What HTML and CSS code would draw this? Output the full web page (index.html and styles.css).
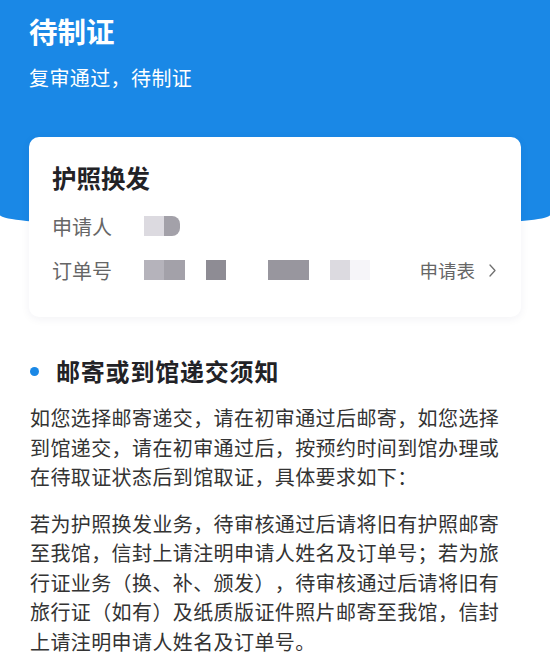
FILE: index.html
```html
<!DOCTYPE html>
<html lang="zh-CN">
<head>
<meta charset="utf-8">
<title>待制证</title>
<link rel="stylesheet" href="styles.css">
</head>
<body>
<div class="page">
  <header class="header">
    <h1 class="title">待制证</h1>
    <p class="subtitle">复审通过，待制证</p>
  </header>
  <section class="card">
    <h2 class="card-title">护照换发</h2>
    <div class="rows">
      <div class="row">
        <span class="label">申请人</span>
        <span class="values">
          <i class="blk b-light w20"></i><i class="blk b-mid2 w16 round-r"></i>
        </span>
      </div>
      <div class="row">
        <span class="label">订单号</span>
        <span class="values">
          <i class="blk b-mid1 w20"></i><i class="blk b-mid2 w21"></i>
          <i class="blk b-dark w20 gap21"></i>
          <i class="blk b-dark2 w41 gap42"></i>
          <i class="blk b-light w20 gap21"></i><i class="blk b-faint w20"></i>
        </span>
        <span class="link">申请表<svg class="chev" width="7" height="13" viewBox="0 0 7 13"><polyline points="1,1 6,6.5 1,12" fill="none" stroke="#707070" stroke-width="1.3" stroke-linecap="round" stroke-linejoin="round"/></svg></span>
      </div>
    </div>
  </section>
  <section class="notice">
    <h3 class="notice-title"><span class="dot"></span>邮寄或到馆递交须知</h3>
    <p class="para">如您选择邮寄递交，请在初审通过后邮寄，如您选择到馆递交，请在初审通过后，按预约时间到馆办理或在待取证状态后到馆取证，具体要求如下：</p>
    <p class="para">若为护照换发业务，待审核通过后请将旧有护照邮寄至我馆，信封上请注明申请人姓名及订单号；若为旅行证业务（换、补、颁发），待审核通过后请将旧有旅行证（如有）及纸质版证件照片邮寄至我馆，信封上请注明申请人姓名及订单号。</p>
  </section>
</div>
</body>
</html>
```

FILE: styles.css
```css
* { box-sizing: border-box; }
html, body { margin: 0; padding: 0; background: #ffffff; }
body {
  font-family: "Noto Sans CJK SC", "Noto Sans", sans-serif;
  width: 550px;
  overflow: hidden;
  text-spacing-trim: space-all;
}
.page { width: 550px; }

.header {
  background: #1a88e6;
  height: 229px;
  padding: 14px 29px 0;
  border-bottom-left-radius: 50% 14px;
  border-bottom-right-radius: 50% 14px;
  color: #ffffff;
}
.title {
  margin: 0;
  font-size: 28.5px;
  font-weight: 700;
  line-height: 34px;
}
.subtitle {
  margin: 16px 0 0;
  font-size: 20px;
  letter-spacing: 0.4px;
  line-height: 28px;
  font-weight: 400;
}

.card {
  margin: -92px 29px 0;
  background: #ffffff;
  border-radius: 10px;
  padding: 24px 23px 30px;
  box-shadow: 0 2px 10px rgba(30, 40, 80, 0.06);
}
.card-title {
  margin: 0;
  font-size: 24.5px;
  font-weight: 700;
  line-height: 34px;
  color: #222226;
}
.rows {
  margin-top: 14px;
  display: flex;
  flex-direction: column;
  gap: 10px;
}
.row {
  display: flex;
  align-items: center;
  height: 34px;
}
.label {
  width: 92px;
  flex: none;
  font-size: 20px;
  color: #666666;
}
.values {
  display: flex;
  align-items: center;
}
.blk {
  display: block;
  height: 20px;
}
.w16 { width: 16px; }
.w20 { width: 20px; }
.w21 { width: 21px; }
.w41 { width: 41px; }
.gap21 { margin-left: 21px; }
.gap42 { margin-left: 42px; }
.round-r { border-radius: 0 8px 8px 0; }
.b-light { background: #dcdae0; }
.b-mid1 { background: #b5b3bb; }
.b-mid2 { background: #a3a1a9; }
.b-dark { background: #8e8c94; }
.b-dark2 { background: #98969e; }
.b-faint { background: #f6f5f9; }

.link {
  margin-left: auto;
  margin-right: 2px;
  font-size: 18.5px;
  color: #666666;
  display: flex;
  align-items: center;
}
.chev {
  margin-left: 14px;
  display: block;
}

.notice {
  padding: 0 40px 0 30px;
  margin-top: 37px;
}
.notice-title {
  margin: 0;
  display: flex;
  align-items: center;
  font-size: 24px;
  letter-spacing: 0.8px;
  font-weight: 700;
  line-height: 34px;
  color: #222226;
}
.dot {
  width: 9px;
  height: 9px;
  border-radius: 50%;
  background: #1a88e6;
  margin-right: 17px;
  flex: none;
}
.para {
  margin: 15px 0 0;
  font-size: 20px;
  letter-spacing: 0.4px;
  line-height: 29.5px;
  color: #333333;
}
.para + .para { margin-top: 17px; }
```
